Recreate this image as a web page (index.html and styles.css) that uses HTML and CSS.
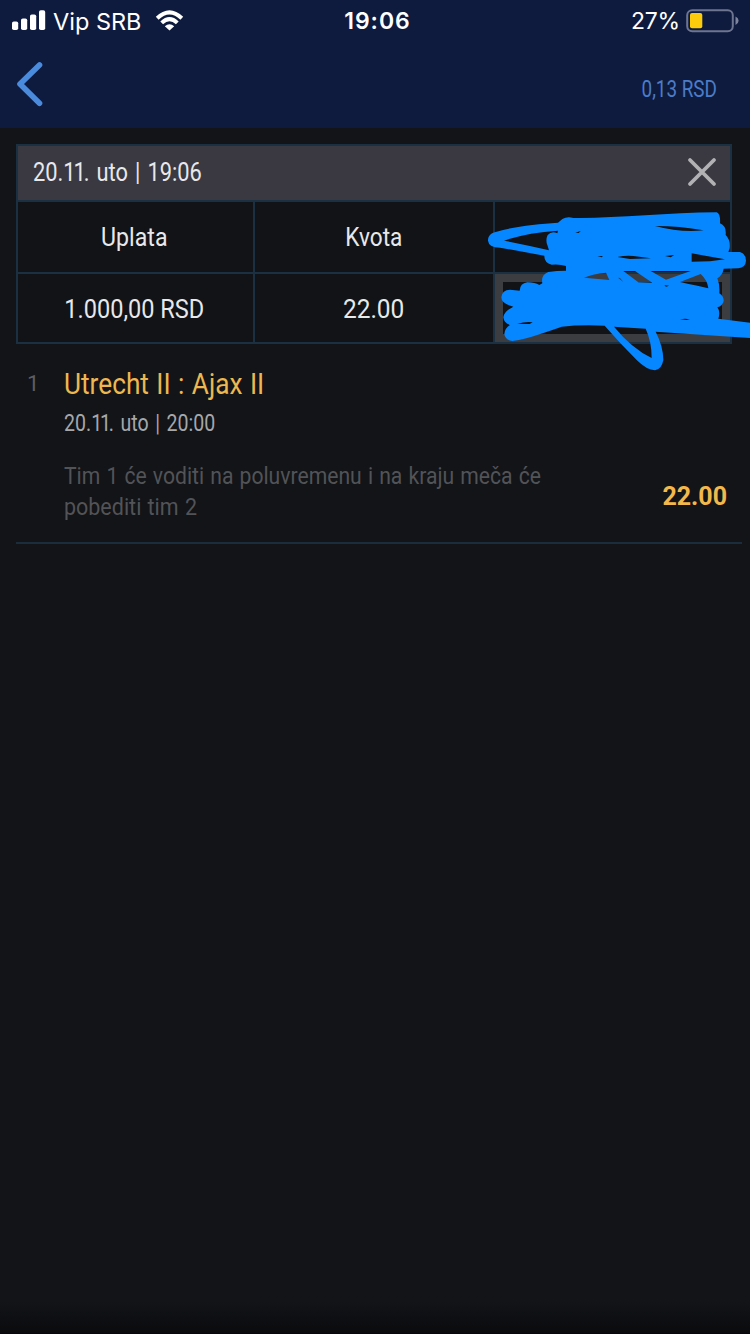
FILE: index.html
```html
<!DOCTYPE html>
<html lang="sr">
<head>
<meta charset="utf-8">
<title>Tiket</title>
<link rel="stylesheet" href="styles.css">
</head>
<body>
<div class="screen">
  <header class="header">
    <div class="status">
      <div class="status-left">
        <svg class="signal" width="34" height="22" viewBox="0 0 34 22"><g fill="#fff"><rect x="0" y="11.500" width="6.200" height="8.500" rx="1.800"/><rect x="9" y="8.500" width="6.200" height="11.500" rx="1.800"/><rect x="18" y="4.500" width="6.200" height="15.500" rx="1.800"/><rect x="27" y="0.300" width="6.200" height="19.700" rx="1.800"/></g></svg>
        <span class="carrier">Vip SRB</span>
        <svg class="wifi" width="30" height="22" viewBox="0 0 30 22"><g fill="none" stroke="#fff" stroke-width="4"><path d="M2.200 8.200Q14.500-3.600 26.800 8.200"/><path d="M6.700 12.900Q14.500 5.400 22.300 12.900"/></g><path fill="#fff" d="M9.800 16.200Q14.500 12.200 19.200 16.200L14.500 20.500Z"/></svg>
      </div>
      <span class="clock">19:06</span>
      <div class="status-right">
        <span class="percent">27%</span>
        <svg class="battery" width="53" height="24" viewBox="0 0 53 24"><rect x="1.200" y="1.200" width="45.600" height="21" rx="5" fill="none" stroke="#6e7590" stroke-width="2"/><rect x="4" y="4" width="12.300" height="15.200" rx="2" fill="#fccb0b"/><path fill="#7d849b" d="M49.500 7.500Q52.600 9 52.600 11.700T49.500 16Z"/></svg>
      </div>
    </div>
    <nav class="nav">
      <svg class="back" width="30" height="46" viewBox="0 0 30 46"><path d="M23.500 4L4 23L23.500 42.300" fill="none" stroke="#4a8bdd" stroke-width="5.600" stroke-linecap="round" stroke-linejoin="round"/></svg>
      <span class="balance">0,13 RSD</span>
    </nav>
  </header>

  <main>
    <section class="ticket">
      <div class="ticket-head">
        <span class="ticket-date">20.<span class="tight">11</span>. uto | 19:06</span>
        <svg class="close" width="30" height="30" viewBox="0 0 30 30"><path d="M3 3L27 27M27 3L3 27" stroke="#b2b2b4" stroke-width="3.800" stroke-linecap="round"/></svg>
      </div>
      <div class="cell"><span class="uplata">Uplata</span></div>
      <div class="cell"><span class="kvota">Kvota</span></div>
      <div class="cell"></div>
      <div class="cell"><span class="amount">1.000,00 RSD</span></div>
      <div class="cell"><span class="odds">22.00</span></div>
      <div class="cell payout"></div>
      <svg class="scribble" width="270" height="180" viewBox="0 0 810 540"><path fill="#0787ff" fill-rule="evenodd" d="M24 122C24 105 35 98 50 95C100 80 170 72 234 68L247 57Q262 48 280 54C400 56 560 38 710 37Q722 42 720 70Q740 78 737 105Q752 120 749 145L745 156L780 156Q798 162 798 182Q797 202 775 205L731 206Q728 225 712 235Q720 255 718 280Q732 290 731 303Q728 318 712 322Q722 335 715 356L810 368L810 414L527 395Q550 440 550 480Q545 508 525 511Q500 510 470 480Q420 430 374 377Q300 374 245 380C200 395 150 415 97 423Q75 420 73 402Q74 385 90 375Q72 370 70 352Q72 338 87 328Q92 325 100 320Q64 312 64 292Q66 270 90 269L119 272Q120 250 142 247Q165 247 178 255L187 250Q182 225 205 216Q230 212 258 212L258 198Q240 192 215 194Q192 188 193 167L60 143Q26 142 24 122Z
        M72 122Q140 98 234 92L232 100Q215 92 203 105Q196 120 202 135L207 151Q140 135 72 122Z
        M525 78Q600 78 671 91Q600 98 525 78Z M286 98L302 93L296 99Z
        M412 171Q435 166 460 168L513 175L450 177Z M635 160L735 178L690 184L635 185Z M555 168L583 165L572 172Z M352 169L368 168L366 172Z
        M312 233Q340 221 378 218L388 240Z M414 233L420 234L430 246Z M430 213L465 213L517 248L475 247Z M512 213L632 213L558 239Z M600 246L662 222Q682 240 685 265Q655 258 600 246Z
        M553 256L568 257L558 260Z M600 358Q615 355 630 358L620 360Z M112 372Q135 364 158 367L149 372Z
        M402 380L497 386Q515 425 515 474Q455 445 402 380Z"/></svg>
    </section>

    <article class="bet">
      <span class="index">1</span>
      <div class="bet-body">
        <h2 class="teams">Utrecht II : Ajax II</h2>
        <p class="kickoff">20.<span class="tight">11</span>. uto | 20:00</p>
        <p class="pick"><span class="pick-a">Tim 1 će voditi na poluvremenu i na kraju meča će</span><br><span class="pick-b">pobediti tim 2</span></p>
      </div>
      <span class="bet-odds">22.00</span>
    </article>
  </main>
</div>
</body>
</html>
```
FILE: styles.css
```css
* { box-sizing: border-box; }
body { margin: 0; background: #121417; font-family: Roboto, sans-serif; color: #e8e8ea; }
h2, p { margin: 0; font-weight: 400; }
svg { display: block; flex: none; }
span, h2 { white-space: nowrap; }

.screen { width: 750px; height: 1334px; overflow: hidden; background: linear-gradient(#121417 0, #121417 1302px, #0b0b0e 1332px, #08040a 1334px); }

.header { height: 128px; background: #0e1b3f; }
.status { height: 42px; display: grid; grid-template-columns: 1fr auto 1fr; align-items: center; padding: 0 11px 0 12px; font-family: Inter, sans-serif; font-size: 23px; color: #fff; }
.status-left, .status-right { display: flex; align-items: center; }
.status-right { justify-content: flex-end; }
.carrier { margin-left: 7px; width: 88px; font-size: 23.5px; }
.wifi { margin-left: 14px; }
.clock { font-weight: 600; letter-spacing: 1px; padding-left: 4px; }
.percent { margin-right: 6px; letter-spacing: -0.2px; }

.nav { height: 86px; display: flex; justify-content: space-between; padding: 19px 33px 0 16px; }
.balance { font-size: 23px; line-height: 30px; margin-top: 14px; color: #4a7cc8; transform: scaleX(0.82); transform-origin: right; }

.ticket { position: relative; margin: 16px 18px 0 16px; padding: 2px; display: grid; grid-template-columns: 235px 238px 235px; grid-template-rows: 54px 70px 68px; gap: 2px; background: #1b3043; }
.ticket-head { grid-column: 1 / -1; background: #3a3942; display: flex; align-items: center; justify-content: space-between; padding: 0 13px 2px 15px; }
.ticket-date { font-size: 26px; word-spacing: 2px; transform: scaleX(0.84); transform-origin: left; }
.tight { letter-spacing: -2.5px; }
.cell { background: #111316; display: flex; align-items: center; justify-content: center; font-size: 26px; }
.uplata { transform: scaleX(0.89); margin-right: 2px; }
.kvota { transform: scaleX(0.87); }
.amount { transform: scaleX(0.905); margin: 2px 3px 0 0; }
.odds { transform: scaleX(0.94); margin-top: 2px; }
.payout { border: 8px solid #3c3d40; }
.scribble { position: absolute; left: 464px; top: 56px; }

.bet { margin: 0 8px 0 16px; height: 200px; display: flex; border-bottom: 2px solid #1b2d3c; }
.index { width: 48px; padding: 26px 0 0 11px; font-size: 22px; line-height: 28px; color: #5d5e61; }
.bet-body { flex: 1; padding-top: 22px; }
.teams { font-size: 29px; line-height: 36px; color: #eeb750; word-spacing: 1px; transform: scaleX(0.905); transform-origin: left; }
.kickoff { font-size: 23px; line-height: 30px; margin-top: 7px; color: #a6a7aa; word-spacing: 2px; transform: scaleX(0.85); transform-origin: left; }
.pick { margin-top: 22px; font-size: 24px; line-height: 31px; color: #525357; word-spacing: 1px; }
.pick-a { display: inline-block; transform: scaleX(0.881); transform-origin: left; }
.pick-b { display: inline-block; transform: scaleX(0.895); transform-origin: left; }
.bet-odds { margin: 136px 15px 0 0; font-size: 25px; line-height: 34px; font-weight: 700; color: #f3b84c; }
```
